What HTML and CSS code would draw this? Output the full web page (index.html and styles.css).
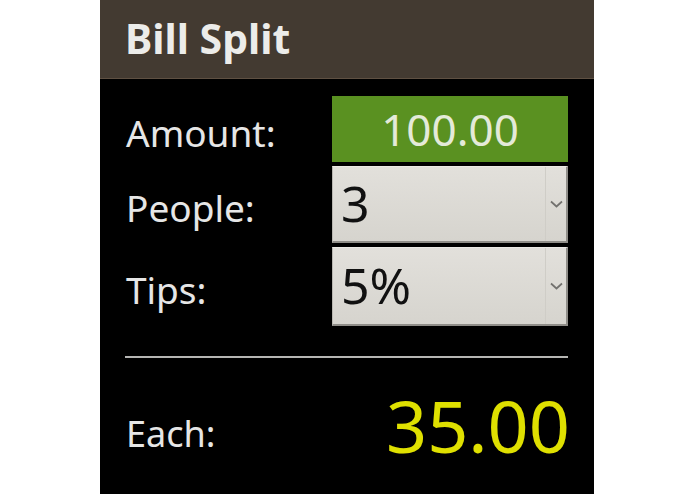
FILE: index.html
```html
<!DOCTYPE html>
<html lang="en">
<head>
<meta charset="utf-8">
<title>Bill Split</title>
<link rel="stylesheet" href="styles.css">
</head>
<body>
<div class="app">
  <header class="titlebar">
    <h1 class="title">Bill Split</h1>
  </header>
  <main class="content">
    <div class="form">
      <div class="label">Amount:</div>
      <div class="amount">100.00</div>

      <div class="label">People:</div>
      <div class="select">
        <span class="select-value">3</span>
        <span class="select-arrow">
          <svg width="13" height="8" viewBox="0 0 13 8"><path d="M1 1.5 L6.5 6.5 L12 1.5" fill="none" stroke="#72716e" stroke-width="1.7"/></svg>
        </span>
      </div>

      <div class="label">Tips:</div>
      <div class="select">
        <span class="select-value">5%</span>
        <span class="select-arrow">
          <svg width="13" height="8" viewBox="0 0 13 8"><path d="M1 1.5 L6.5 6.5 L12 1.5" fill="none" stroke="#72716e" stroke-width="1.7"/></svg>
        </span>
      </div>
    </div>

    <hr class="divider">

    <div class="result">
      <div class="label">Each:</div>
      <div class="each">35.00</div>
    </div>
  </main>
</div>
</body>
</html>
```

FILE: styles.css
```css
html, body {
  margin: 0;
  padding: 0;
  background: #ffffff;
}

body {
  font-family: "Noto Sans", "Open Sans", "DejaVu Sans", sans-serif;
}

.app {
  width: 494px;
  height: 494px;
  margin-left: 100px;
  background: #000000;
  display: flex;
  flex-direction: column;
}

.titlebar {
  height: 79px;
  background: #433a31;
  border-bottom: 1px solid #5f5042;
  display: flex;
  align-items: center;
  padding-left: 25px;
}

.title {
  margin: 0;
  font-size: 41px;
  font-weight: 700;
  color: #ececea;
  line-height: 1;
  padding-bottom: 2px;
}

.content {
  padding: 17px 26px 0 25px;
}

.form {
  display: grid;
  grid-template-columns: 1fr 236px;
  grid-template-rows: 66px 77px 79px;
  row-gap: 4px;
  align-items: center;
}

.label {
  font-size: 37px;
  color: #e6e6e6;
  line-height: 1;
  padding-top: 6px;
  padding-left: 1px;
}

.amount {
  height: 66px;
  background: #5a9121;
  color: #e4ead9;
  font-size: 44px;
  line-height: 66px;
  text-align: center;
}

.select {
  height: 100%;
  box-sizing: border-box;
  background: linear-gradient(#e2e0db, #d6d4ce);
  border-top: 1px solid #eceae6;
  border-left: 1px solid #b9b7b1;
  border-right: 2px solid #8f8d88;
  border-bottom: 2px solid #8f8d88;
  display: flex;
  align-items: center;
}

.select-value {
  flex: 1;
  font-size: 50px;
  color: #111111;
  line-height: 1;
  padding-left: 8px;
  padding-bottom: 2px;
}

.select-arrow {
  align-self: stretch;
  width: 20px;
  border-left: 1px solid #cfcdc7;
  display: flex;
  align-items: center;
  justify-content: center;
}

.divider {
  margin: 30px 0 0 0;
  border: 0;
  height: 2px;
  background: #b5b5b3;
}

.result {
  display: flex;
  align-items: center;
  justify-content: space-between;
  height: 136px;
}

.result .label {
  font-size: 36px;
  padding-top: 16px;
}

.each {
  font-size: 72px;
  color: #dfe000;
  line-height: 1;
  padding-bottom: 2px;
  margin-right: -2px;
}
```
